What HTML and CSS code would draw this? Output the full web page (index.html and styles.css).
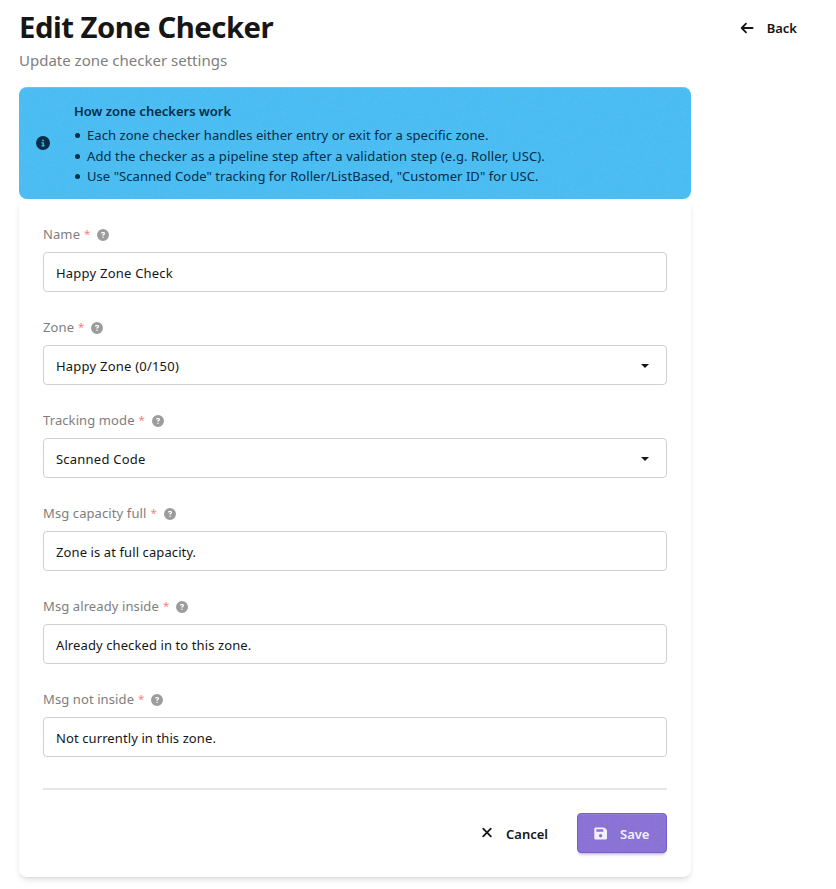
FILE: index.html
```html
<!DOCTYPE html>
<html lang="en">
<head>
<meta charset="utf-8">
<title>Edit Zone Checker</title>
<link rel="stylesheet" href="styles.css">
</head>
<body>
<svg class="defs" width="0" height="0" aria-hidden="true">
  <symbol id="help" viewBox="0 0 512 512"><path fill="currentColor" fill-rule="evenodd" d="M256 0a256 256 0 1 0 0 512 256 256 0 0 0 0-512zM170 165c8-22 29-37 53-37h58c35 0 63 28 63 63 0 23-12 43-32 55l-32 18c0 13-11 24-24 24s-24-11-24-24v-14c0-9 5-16 12-21l44-25c5-3 8-8 8-13 0-9-7-15-15-15h-58c-4 0-7 2-8 5-4 13-18 19-31 15s-19-18-14-31zM224 352a32 32 0 1 1 64 0 32 32 0 0 1-64 0z"/></symbol>
</svg>
<header class="page-header">
  <div>
    <h1>Edit Zone Checker</h1>
    <p class="subtitle">Update zone checker settings</p>
  </div>
  <a class="back"><svg viewBox="0 0 14 14" width="14" height="14" fill="none" stroke="currentColor" stroke-width="1.8" stroke-linecap="round" stroke-linejoin="round"><path d="M12.600 7H1.800M6 2.700L1.700 7 6 11.300"/></svg><span>Back</span></a>
</header>
<main>
  <section class="alert">
    <svg class="info" viewBox="0 0 512 512" width="14" height="14"><path fill="currentColor" fill-rule="evenodd" d="M256 0a256 256 0 1 0 0 512 256 256 0 0 0 0-512zM216 336h24v-64h-24a24 24 0 0 1 0-48h48a24 24 0 0 1 24 24v88h8a24 24 0 0 1 0 48h-80a24 24 0 0 1 0-48zM256 128a32 32 0 1 1 0 64 32 32 0 0 1 0-64z"/></svg>
    <div class="alert-body">
      <h2>How zone checkers work</h2>
      <ul>
        <li>Each zone checker handles either entry or exit for a specific zone.</li>
        <li class="loose">Add the checker as a pipeline step after a validation step (e.g. Roller, USC).</li>
        <li>Use "Scanned Code" tracking for Roller/ListBased, "Customer ID" for USC.</li>
      </ul>
    </div>
  </section>
  <form class="card">
    <div class="field"><label>Name <b>*</b><svg class="help"><use href="#help"/></svg></label><div class="input wide">Happy Zone Check</div></div>
    <div class="field"><label>Zone <b>*</b><svg class="help"><use href="#help"/></svg></label><div class="input select wide">Happy Zone (0/150)</div></div>
    <div class="field"><label>Tracking mode <b>*</b><svg class="help"><use href="#help"/></svg></label><div class="input select wide">Scanned Code</div></div>
    <div class="field"><label>Msg capacity full <b>*</b><svg class="help"><use href="#help"/></svg></label><div class="input">Zone is at full capacity.</div></div>
    <div class="field"><label>Msg already inside <b>*</b><svg class="help"><use href="#help"/></svg></label><div class="input">Already checked in to this zone.</div></div>
    <div class="field"><label>Msg not inside <b>*</b><svg class="help"><use href="#help"/></svg></label><div class="input">Not currently in this zone.</div></div>
    <hr>
    <div class="actions">
      <a class="btn"><svg viewBox="0 0 12 12" width="12" height="12" fill="none" stroke="currentColor" stroke-width="1.8" stroke-linecap="round"><path d="M2.200 1.700l7.600 7.600M9.800 1.700l-7.600 7.600"/></svg><span>Cancel</span></a>
      <a class="btn primary"><svg viewBox="0 0 13 13" width="13" height="13"><path fill="currentColor" fill-rule="evenodd" d="M2 .5h7.600c.5 0 1 .2 1.300.5l1.600 1.600c.3.3.5.8.5 1.300V11c0 .9-.8 1.600-1.700 1.600H2C1 12.600.3 11.900.3 11V2.100C.3 1.200 1 .5 2 .5zM2.300 2.300v2.400h7V2.300zM6.600 7a1.700 1.700 0 1 0 0 3.400 1.700 1.700 0 0 0 0-3.400z"/></svg><span>Save</span></a>
    </div>
  </form>
</main>
</body>
</html>
```
FILE: styles.css
```css
:root {
  --noise: url("data:image/svg+xml,%3Csvg xmlns='http://www.w3.org/2000/svg' width='200' height='200'%3E%3Cfilter id='a'%3E%3CfeTurbulence type='fractalNoise' baseFrequency='1.34' numOctaves='4' stitchTiles='stitch'/%3E%3C/filter%3E%3Crect width='200' height='200' filter='url(%23a)' opacity='0.15'/%3E%3C/svg%3E");
}
* { box-sizing: border-box; }
body {
  margin: 0;
  min-height: 889px;
  padding: 8px 19px 0;
  background: #fff;
  color: #161616;
  font: 13px/20px "Noto Sans", "Open Sans", sans-serif;
}
.defs { position: absolute; }
h1, h2, p, ul { margin: 0; padding: 0; }
svg { flex: none; display: block; }
.page-header { display: flex; justify-content: space-between; height: 79px; }
h1 { font-size: 29.3px; line-height: 38px; margin-bottom: 2px; font-weight: 700; letter-spacing: -0.5px; white-space: nowrap; }
.subtitle { font-size: 15px; line-height: 24px; color: #7e7e7e; }
.back { display: flex; align-items: center; height: 40px; gap: 13px; padding-right: 20px; font-weight: 600; }
main { width: 672px; }
.alert {
  display: flex;
  align-items: center;
  gap: 24px;
  height: 112px;
  padding: 0 17px;
  border-radius: 8px;
  background: var(--noise) #42bdf6;
  box-shadow: inset 0 1px rgba(255, 255, 255, .14);
  color: #042e49;
}
.alert-body { padding-top: 2px; }
h2 { font-size: 13px; line-height: 20px; font-weight: 600; margin-bottom: 4px; }
ul { list-style: none; }
li { position: relative; padding-left: 13px; line-height: 20.5px; letter-spacing: .06px; white-space: nowrap; }
li::before { content: ""; position: absolute; left: 1px; top: 8px; width: 5px; height: 5px; border-radius: 50%; background: currentColor; }
.loose { letter-spacing: .11px; }
.card {
  height: 678px;
  padding: 23px 24px 0;
  border-radius: 8px;
  background: #fff;
  box-shadow: 0 4px 6px -1px rgba(0, 0, 0, .1), 0 2px 4px -2px rgba(0, 0, 0, .1);
}
.field { height: 93px; }
label { display: flex; align-items: center; height: 24px; margin-bottom: 6px; color: #7e7e7e; letter-spacing: .1px; }
label b { margin-left: 4px; font-weight: 400; font-size: 11.5px; letter-spacing: 0; color: #fa8080; }
.help { width: 12px; height: 12px; margin: 1px 0 0 7px; color: #9c9c9c; }
.input {
  display: flex;
  align-items: center;
  justify-content: space-between;
  height: 40px;
  padding: 2px 17px 0 12px;
  border: 1px solid #d0d0d0;
  border-radius: 4px;
  letter-spacing: .1px;
}
.wide { letter-spacing: .22px; }
.select::after { content: ""; box-sizing: content-box; width: 0; height: 0; margin-bottom: 1px; border: 4px solid transparent; border-top-color: #161616; border-bottom: 0; }
hr { height: 2px; margin: 8px 0 23px; border: 0; background: #e5e5e5; }
.actions { display: flex; justify-content: flex-end; gap: 12px; }
.btn { display: flex; align-items: center; height: 40px; padding: 0 17px; gap: 13px; font-weight: 600; }
.btn span { padding-top: 2px; }
.primary {
  width: 90px;
  border: 1px solid #785ec7;
  border-radius: 4px;
  background: var(--noise) #876ed8;
  color: #f3f0ff;
  padding: 0 16px;
  box-shadow: inset 0 1px rgba(255, 255, 255, .08), 0 3px 2px -2px rgba(135, 110, 216, .3), 0 4px 3px -2px rgba(135, 110, 216, .3);
}
```
